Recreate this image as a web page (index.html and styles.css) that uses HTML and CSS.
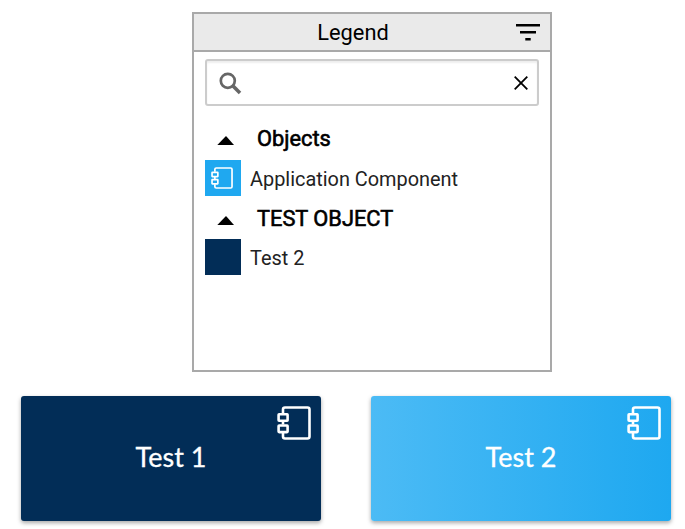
FILE: index.html
```
<!DOCTYPE html>
<html lang="en">
<head>
  <meta charset="UTF-8">
  <title>Legend</title>
  <link rel="stylesheet" href="styles.css">
</head>
<body>

  <!-- Shared component symbol -->
  <svg class="symbols" aria-hidden="true">
    <symbol id="component" viewBox="0 0 34 34">
      <path d="M6 7.5V3.5Q6 1.5 8 1.5H30.5Q32.5 1.5 32.5 3.5V30.5Q32.5 32.5 30.5 32.5H8Q6 32.5 6 30.5V26.5M6 15.5V18.5" />
      <rect x="1.6" y="8.2" width="9" height="6.6" rx="0.5" />
      <rect x="1.6" y="19.5" width="9" height="6.6" rx="0.5" />
    </symbol>
  </svg>

  <div class="legend">
    <div class="legend-header">
      <span class="legend-title">Legend</span>
      <svg class="filter-icon" viewBox="0 0 24 18">
        <path d="M0 1.3H24M4 8.2H20M9.3 15.2H14.7" />
      </svg>
    </div>

    <div class="search-box">
      <svg class="search-icon" viewBox="0 0 23 23">
        <circle cx="8.8" cy="8.8" r="7" />
        <path d="M13.8 13.8L21 21" />
      </svg>
      <svg class="clear-icon" viewBox="0 0 14 14">
        <path d="M0.7 0.7L13.3 13.3M13.3 0.7L0.7 13.3" />
      </svg>
    </div>

    <div class="group">
      <div class="group-title"><span class="arrow"></span><span>Objects</span></div>
      <div class="item">
        <span class="swatch light"><svg class="component-icon small"><use href="#component" /></svg></span>
        <span class="item-name">Application Component</span>
      </div>
    </div>

    <div class="group">
      <div class="group-title"><span class="arrow"></span><span>TEST OBJECT</span></div>
      <div class="item">
        <span class="swatch dark"></span>
        <span class="item-name">Test 2</span>
      </div>
    </div>
  </div>

  <div class="cards">
    <div class="card card-dark">
      <span>Test 1</span>
      <svg class="component-icon corner"><use href="#component" /></svg>
    </div>
    <div class="card card-light">
      <span>Test 2</span>
      <svg class="component-icon corner"><use href="#component" /></svg>
    </div>
  </div>

</body>
</html>
```
FILE: styles.css
```
* {
  box-sizing: border-box;
}

body {
  margin: 0;
  padding: 12px 0 0;
  background: #fff;
  color: #000;
  font-family: Roboto, sans-serif;
  height: 529px;
  overflow: hidden;
}

.symbols {
  display: none;
}

.legend {
  width: 360px;
  height: 360px;
  margin-left: 192px;
  border: 2px solid #a9a9a9;
}

.legend-header {
  display: flex;
  align-items: center;
  height: 38px;
  padding: 0 10px 0 0;
  background: #eaeaea;
  border-bottom: 2px solid #a9a9a9;
}

.legend-title {
  flex: 1;
  padding-right: 4px;
  text-align: center;
  font-size: 21.8px;
}

.filter-icon {
  width: 24px;
  height: 18px;
  margin-top: 1px;
  fill: none;
  stroke: #000;
  stroke-width: 2.5;
}

.search-box {
  display: flex;
  align-items: center;
  justify-content: space-between;
  width: 334px;
  height: 47px;
  margin: 7px 0 13px 11px;
  padding: 0 9px 0 12px;
  border: 2px solid #ccc;
  border-radius: 3px;
  box-shadow: inset 0 2px 2px rgba(0, 0, 0, 0.07);
}

.search-icon {
  width: 23px;
  height: 23px;
  margin-top: 2px;
  fill: none;
  stroke: #666;
  stroke-width: 2.7;
}

.search-icon path {
  stroke-width: 3.6;
}

.clear-icon {
  width: 14px;
  height: 14px;
  fill: none;
  stroke: #000;
  stroke-width: 1.8;
}

.group {
  padding-left: 11px;
}

.group + .group {
  margin-top: 3px;
}

.group-title {
  display: flex;
  align-items: center;
  height: 40px;
  padding: 0 0 1px 12px;
  font-size: 21.8px;
  -webkit-text-stroke: 0.6px #000;
}

.group:nth-of-type(3) {
  padding-top: 1px;
}

.group:nth-of-type(3) .group-title {
  padding-bottom: 3px;
}

.arrow {
  width: 17px;
  height: 9px;
  margin: 4px 23px 0 0;
  background: #000;
  clip-path: polygon(2% 100%, 53% 0, 100% 100%);
}

.item {
  display: flex;
  align-items: center;
  gap: 9px;
  height: 36px;
  color: #222;
  font-size: 19.9px;
}

.item-name {
  padding-top: 2px;
}

.swatch {
  display: flex;
  align-items: center;
  justify-content: center;
  width: 36px;
  height: 36px;
}

.light {
  padding-right: 2px;
  background: #1fa8f0;
}

.dark {
  background: #022d57;
}

.component-icon {
  fill: none;
  stroke: #fff;
  stroke-width: 2.6;
}

.small {
  width: 22px;
  height: 22px;
}

.cards {
  display: flex;
  gap: 50px;
  margin: 24px 0 0 21px;
}

.card {
  position: relative;
  display: flex;
  align-items: center;
  justify-content: center;
  width: 300px;
  height: 125px;
  padding-bottom: 4px;
  border-radius: 3px;
  box-shadow: 0 2px 4px rgba(0, 0, 0, 0.35);
  color: #fff;
  font-family: Lato, sans-serif;
  font-size: 27px;
  -webkit-text-stroke: 0.3px #fff;
}

.card-dark {
  background: #022d57;
}

.card-light {
  background: linear-gradient(to right, #4cbbf5, #1ea8f0);
}

.corner {
  position: absolute;
  top: 10px;
  right: 10px;
  width: 34px;
  height: 34px;
}
```
